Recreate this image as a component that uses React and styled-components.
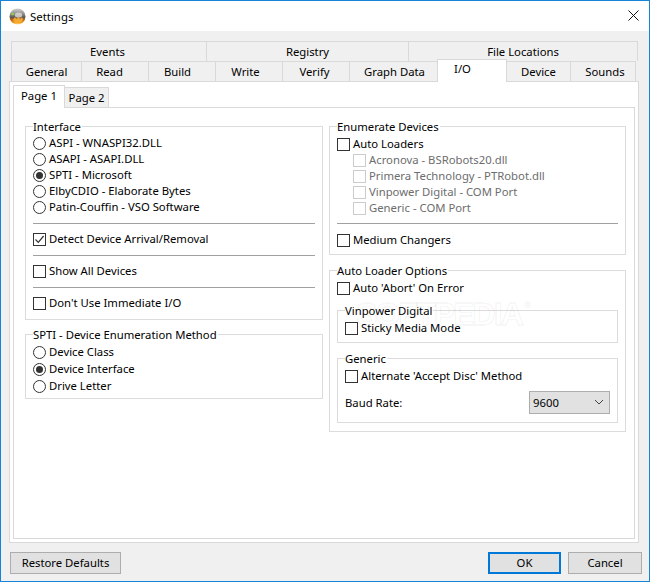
import React from "react";
import styled, { createGlobalStyle } from "styled-components";

const Global = createGlobalStyle`
  html, body { margin: 0; padding: 0; background: #f0f0f0; }
  * { box-sizing: border-box; }
`;

const Window = styled.div`
  width: 650px;
  height: 582px;
  border: 1px solid #1583d8;
  background: #f0f0f0;
  display: flex;
  flex-direction: column;
  font-family: "Noto Sans", "Open Sans", sans-serif;
  font-size: 11.3px;
  color: #000;
  overflow: hidden;
`;
const TitleBar = styled.div`
  height: 30px;
  flex: none;
  background: #fff;
  display: flex;
  align-items: center;
  padding: 0 10px 0 8px;
  gap: 4px;
`;
const Title = styled.span`
  flex: 1;
  font-size: 11.4px;
`;
const CloseIcon = styled.svg`
  margin-bottom: 2px;
`;
const TabArea = styled.div`
  margin: 10px 10px 0 8px;
  display: flex;
  flex-direction: column;
`;
const Strip = styled.div`
  margin: 0 2px;
  display: flex;
  height: 20px;
  align-items: flex-start;
`;
const Tab = styled.div`
  width: ${(p) => p.$w}px;
  height: 20px;
  flex: none;
  background: #f0f0f0;
  border-top: 1px solid #d9d9d9;
  border-left: 1px solid #d9d9d9;
  border-right: ${(p) => (p.$last ? "1px solid #d9d9d9" : "0")};
  padding-left: ${(p) => (p.$dx > 0 ? p.$dx : 0)}px;
  padding-right: ${(p) => (p.$dx < 0 ? -p.$dx : 0)}px;
  display: flex;
  align-items: center;
  justify-content: center;
`;
const ActiveTab = styled.div`
  width: ${(p) => p.$w}px;
  height: 23px;
  flex: none;
  margin-top: -2px;
  margin-right: -1px;
  position: relative;
  z-index: 1;
  background: #fff;
  border: 1px solid #d9d9d9;
  border-bottom: 0;
  display: flex;
  justify-content: center;
  padding: 1px 19px 0 0;
`;
const Panel = styled.div`
  height: 462px;
  border: 1px solid #d9d9d9;
  background: #fff;
  padding: 3px;
  display: flex;
  flex-direction: column;
`;
const PageStrip = styled.div`
  display: flex;
  align-items: flex-end;
  height: 22px;
  flex: none;
`;
const PageTab = styled.div`
  width: 52px;
  height: 23px;
  margin-bottom: -1px;
  position: relative;
  z-index: 1;
  background: #fff;
  border: 1px solid #d9d9d9;
  border-bottom: 0;
  padding-left: 7px;
  line-height: 20px;
`;
const PageTabIdle = styled.div`
  width: 44px;
  height: 20px;
  background: #f0f0f0;
  border: 1px solid #d9d9d9;
  border-left: 0;
  border-bottom: 0;
  text-align: center;
  line-height: 20px;
`;
const Page = styled.div`
  flex: 1;
  border: 1px solid #d9d9d9;
  padding: 18px 9px 0 11px;
  display: grid;
  grid-template-columns: 298px 297px;
  column-gap: 6px;
  align-content: start;
`;
const Column = styled.div`
  display: flex;
  flex-direction: column;
  align-items: stretch;
`;
const Group = styled.div`
  position: relative;
  border: 1px solid #dcdcdc;
  padding: ${(p) => p.$pad || "8px 7px 8px"};
  margin-top: ${(p) => p.$mt || 0}px;
`;
const Legend = styled.span`
  position: absolute;
  top: -8px;
  left: 7px;
  background: #fff;
  line-height: 16px;
  padding-right: 1px;
  white-space: nowrap;
`;
const Row = styled.label`
  display: flex;
  align-items: center;
  gap: 3px;
  height: ${(p) => p.$h || 16}px;
  padding-left: ${(p) => p.$indent || 0}px;
  color: ${(p) => (p.$off ? "#6d6d6d" : "#000")};
  white-space: nowrap;
`;
const RowText = styled.span`
  margin-bottom: 2px;
`;
const Box = styled.span`
  width: 13px;
  height: 13px;
  flex: none;
  border: 1px solid ${(p) => (p.$off ? "#cccccc" : "#333333")};
  background: #fff;
  display: flex;
`;
const Round = styled.span`
  width: 13px;
  height: 13px;
  flex: none;
  border: 1px solid #333;
  border-radius: 50%;
  background: #fff;
  display: flex;
  align-items: center;
  justify-content: center;
  &::after {
    content: "";
    display: ${(p) => (p.$on ? "block" : "none")};
    width: 7px;
    height: 7px;
    border-radius: 50%;
    background: #333;
  }
`;
const Rule = styled.div`
  height: 1px;
  background: #a0a0a0;
  margin: ${(p) => p.$m || "8px 0 7px"};
`;
const BaudRow = styled.div`
  display: flex;
  align-items: center;
  justify-content: space-between;
  margin-top: 7px;
`;
const Select = styled.div`
  width: 81px;
  height: 23px;
  background: #e1e1e1;
  border: 1px solid #adadad;
  display: flex;
  align-items: center;
  justify-content: space-between;
  padding: 0 5px 1px 3px;
`;
const Watermark = styled.span`
  position: absolute;
  z-index: 3;
  left: 26px;
  top: 16px;
  font-family: "Liberation Sans", sans-serif;
  font-weight: 700;
  font-size: 32px;
  letter-spacing: -1.9px;
  line-height: 36px;
  color: transparent;
  -webkit-text-stroke: 1.5px rgba(0, 0, 0, 0.05);
  pointer-events: none;
  white-space: nowrap;
`;
const Registered = styled.span`
  font-size: 9px;
  letter-spacing: 0;
  vertical-align: 17px;
  margin-left: 2px;
  -webkit-text-stroke: 0.6px rgba(0, 0, 0, 0.05);
`;
const Footer = styled.div`
  display: flex;
  padding: 9px 7px 0 9px;
  gap: 7px;
`;
const Button = styled.button`
  height: 22px;
  width: ${(p) => p.$w}px;
  flex: none;
  margin-right: ${(p) => p.$mr || 0}px;
  padding: 0 0 1px;
  background: #e1e1e1;
  border: ${(p) => (p.$def ? "2px solid #0078d7" : "1px solid #adadad")};
  font: inherit;
  color: #000;
`;

const Logo = () => (
  <svg width="17" height="17" viewBox="0 0 17 17">
    <defs>
      <linearGradient id="sph" x1="0" y1="0" x2="0" y2="1">
        <stop offset="0" stopColor="#cfcfcf" />
        <stop offset="0.35" stopColor="#8f8c89" />
        <stop offset="0.55" stopColor="#5d5651" />
        <stop offset="0.68" stopColor="#b9611a" />
        <stop offset="0.88" stopColor="#f4a11f" />
        <stop offset="1" stopColor="#ffdf8a" />
      </linearGradient>
    </defs>
    <circle cx="8.5" cy="8.5" r="8" fill="url(#sph)" />
    <ellipse cx="9.5" cy="7" rx="3.6" ry="2.6" fill="#e4e2df" opacity="0.75" />
    <path d="M4 11.5 L6 9 L7.5 11 L9.5 8.5 L11 11 L13 9 L14 11.5 L12 14.5 H6 Z" fill="#f7b23a" opacity="0.85" />
    <circle cx="3.6" cy="6" r="1.3" fill="#86d84a" />
  </svg>
);
const Close = () => (
  <CloseIcon width="11" height="11" viewBox="0 0 11 11">
    <path d="M0.5 0.5 L10.5 10.5 M10.5 0.5 L0.5 10.5" stroke="#111" strokeWidth="1" fill="none" />
  </CloseIcon>
);
const Check = () => (
  <svg width="11" height="11" viewBox="0 0 11 11">
    <path d="M1.5 5.5 L4.3 8.3 L9.6 2" stroke="#333" strokeWidth="1.2" fill="none" />
  </svg>
);
const Chevron = () => (
  <svg width="10" height="6" viewBox="0 0 10 6">
    <path d="M1 1 L5 5 L9 1" stroke="#444" strokeWidth="1" fill="none" />
  </svg>
);

const Radio = ({ on, h, children }) => (
  <Row $h={h}>
    <Round $on={on} />
    <RowText>{children}</RowText>
  </Row>
);
const CheckRow = ({ on, off, indent, children }) => (
  <Row $off={off} $indent={indent}>
    <Box $off={off}>{on && <Check />}</Box>
    <RowText>{children}</RowText>
  </Row>
);

const top = [["Events", 195, -3], ["Registry", 202, 0], ["File Locations", 230, 0]];
const second = [["General", 70, 0], ["Read", 67, -11], ["Build", 67, -9], ["Write", 67, -7], ["Verify", 67, -3], ["Graph Data", 88, 2]];
const third = [["Device", 64, 0], ["Sounds", 66, 4]];

export default function App() {
  return (
    <>
      <Global />
      <Window>
        <TitleBar>
          <Logo />
          <Title>Settings</Title>
          <Close />
        </TitleBar>
        <TabArea>
          <Strip>
            {top.map(([t, w, d], i) => (
              <Tab key={t} $w={w} $dx={d} $last={i === 2}>{t}</Tab>
            ))}
          </Strip>
          <Strip>
            {second.map(([t, w, d]) => (
              <Tab key={t} $w={w} $dx={d}>{t}</Tab>
            ))}
            <ActiveTab $w={70}>I/O</ActiveTab>
            {third.map(([t, w, d], i) => (
              <Tab key={t} $w={w} $dx={d} $last={i === 1}>{t}</Tab>
            ))}
          </Strip>
          <Panel>
            <PageStrip>
              <PageTab>Page 1</PageTab>
              <PageTabIdle>Page 2</PageTabIdle>
            </PageStrip>
            <Page>
              <Column>
                <Group>
                  <Legend>Interface</Legend>
                  <Radio>ASPI - WNASPI32.DLL</Radio>
                  <Radio>ASAPI - ASAPI.DLL</Radio>
                  <Radio on>SPTI - Microsoft</Radio>
                  <Radio>ElbyCDIO - Elaborate Bytes</Radio>
                  <Radio>Patin-Couffin - VSO Software</Radio>
                  <Rule />
                  <CheckRow on>Detect Device Arrival/Removal</CheckRow>
                  <Rule />
                  <CheckRow>Show All Devices</CheckRow>
                  <Rule />
                  <CheckRow>Don't Use Immediate I/O</CheckRow>
                </Group>
                <Group $mt={14} $pad="9px 7px 3px">
                  <Legend>SPTI - Device Enumeration Method</Legend>
                  <Radio h={17}>Device Class</Radio>
                  <Radio h={17} on>Device Interface</Radio>
                  <Radio h={17}>Drive Letter</Radio>
                </Group>
              </Column>
              <Column>
                <Group $pad="9px 7px 6px">
                  <Legend>Enumerate Devices</Legend>
                  <CheckRow>Auto Loaders</CheckRow>
                  <CheckRow off indent={16}>Acronova - BSRobots20.dll</CheckRow>
                  <CheckRow off indent={16}>Primera Technology - PTRobot.dll</CheckRow>
                  <CheckRow off indent={16}>Vinpower Digital - COM Port</CheckRow>
                  <CheckRow off indent={16}>Generic - COM Port</CheckRow>
                  <Rule $m="7px 0 8px" />
                  <CheckRow>Medium Changers</CheckRow>
                </Group>
                <Group $mt={15} $pad="9px 7px 8px">
                  <Legend>Auto Loader Options</Legend>
                  <CheckRow>Auto 'Abort' On Error</CheckRow>
                  <Group $mt={14} $pad="9px 7px 6px">
                    <Legend>Vinpower Digital</Legend>
                    <CheckRow>Sticky Media Mode</CheckRow>
                  </Group>
                  <Group $mt={15} $pad="9px 7px 8px">
                    <Legend>Generic</Legend>
                    <CheckRow>Alternate 'Accept Disc' Method</CheckRow>
                    <BaudRow>
                      <span>Baud Rate:</span>
                      <Select>
                        9600
                        <Chevron />
                      </Select>
                    </BaudRow>
                  </Group>
                  <Watermark>SOFTPEDIA<Registered>®</Registered></Watermark>
                </Group>
              </Column>
            </Page>
          </Panel>
        </TabArea>
        <Footer>
          <Button $w={111} $mr={360}>Restore Defaults</Button>
          <Button $w={73} $def>OK</Button>
          <Button $w={74}>Cancel</Button>
        </Footer>
      </Window>
    </>
  );
}
